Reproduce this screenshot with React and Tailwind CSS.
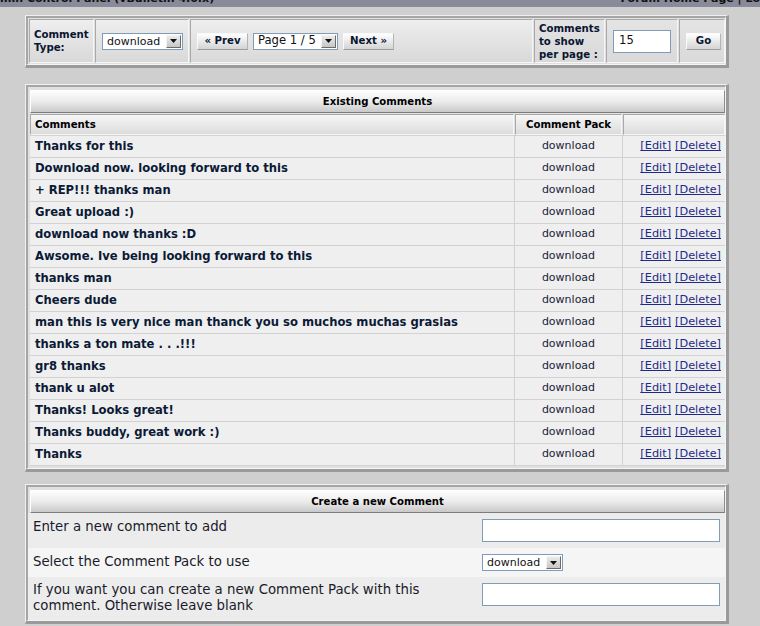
import React from 'react';

const comments = [
    'Thanks for this',
    'Download now. looking forward to this',
    '+ REP!!! thanks man',
    'Great upload :)',
    'download now thanks :D',
    'Awsome. Ive being looking forward to this',
    'thanks man',
    'Cheers dude',
    'man this is very nice man thanck you so muchos muchas grasias',
    'thanks a ton mate . . .!!!',
    'gr8 thanks',
    'thank u alot',
    'Thanks! Looks great!',
    'Thanks buddy, great work :)',
    'Thanks',
];

const cell = 'border border-t-[#a9a9a9] border-l-[#a9a9a9] border-r-[#f6f6f6] border-b-[#f6f6f6]';

// bevelled frame: light outer line, dark inner line on top/left; dark outer on bottom/right
function Panel({ className = '', inner = '', children }) {
    return (
        <div className={`ml-[25px] w-[704px] border-t border-l border-t-[#f0f0f0] border-l-[#f0f0f0] border-r-[3px] border-b-[3px] border-r-[#9a9a9a] border-b-[#9a9a9a] ${className}`}>
            <div className={`border-t-2 border-l-2 border-t-[#a6a6a6] border-l-[#a6a6a6] border-r border-b border-r-[#f4f4f4] border-b-[#f4f4f4] bg-[#e0e0e0] ${inner}`}>
                {children}
            </div>
        </div>
    );
}

function Select({ value, width, text = 'text-[11px]' }) {
    return (
        <div className={`flex h-[17px] items-center border border-[#7f9db9] bg-white ${width}`}>
            <span className={`flex-1 pl-[4px] leading-none text-[#111] ${text}`}>{value}</span>
            <span className="m-px flex h-[13px] w-[15px] items-center justify-center border border-t-[#f4f4f4] border-l-[#f4f4f4] border-r-[#6b6b6b] border-b-[#6b6b6b] bg-gradient-to-b from-[#ececec] to-[#c6c6c6]">
                <svg width="7" height="4" viewBox="0 0 7 4"><path d="M0 0h7L3.5 4z" fill="#111" /></svg>
            </span>
        </div>
    );
}

function Btn({ children, width }) {
    return (
        <div className={`flex h-[17px] items-center justify-center border border-t-[#fafafa] border-l-[#fafafa] border-r-[#b4b4b4] border-b-[#9c9c9c] bg-gradient-to-b from-[#ffffff] to-[#d4d4d4] text-[10.2px] font-bold text-[#0a1530] ${width}`}>
            {children}
        </div>
    );
}

function Header({ children }) {
    return (
        <div className="flex h-[23px] items-center justify-center border border-t-[#ffffff] border-l-[#ffffff] border-r-[#8c8c8c] border-b-[#7c7c7c] bg-gradient-to-b from-[#fdfdfd] via-[#ececec] to-[#c9c9c9] text-[10.1px] font-bold text-[#000]">
            {children}
        </div>
    );
}

export default function App() {
    return (
        <div className="min-h-[626px] bg-[#cfcfcf] font-['DejaVu_Sans',Verdana,sans-serif]">
            {/* top strip, mostly cut off */}
            <div className="flex h-[7px] justify-between overflow-hidden bg-[#898a9a] text-[11px] font-bold text-[#111]">
                <span className="-mt-[8px] leading-[13px]">min Control Panel (vBulletin 4.0.x)</span>
                <span className="-mt-[8px] leading-[13px]">Forum Home Page | Lo</span>
            </div>

            {/* filter bar */}
            <Panel className="mt-[8px]" inner="py-px pl-px">
                <div className="flex h-[44px] gap-px">
                    <div className={`${cell} flex w-[65px] items-center bg-gradient-to-b from-[#eeeeee] to-[#d9d9d9] pl-[4px] text-[10.2px] font-bold leading-[13px] text-[#0a1530]`}>
                        Comment<br />Type:
                    </div>
                    <div className={`${cell} flex w-[94px] items-center bg-gradient-to-b from-[#eeeeee] to-[#d9d9d9] pl-[6px]`}>
                        <Select value="download" width="w-[81px]" />
                    </div>
                    <div className={`${cell} flex w-[343px] items-center gap-[5px] bg-gradient-to-b from-[#eeeeee] to-[#d9d9d9] pl-[6px]`}>
                        <Btn width="w-[51px]">« Prev</Btn>
                        <Select value="Page 1 / 5" width="w-[85px]" text="text-[11.6px]" />
                        <Btn width="w-[51px]">Next »</Btn>
                    </div>
                    <div className={`${cell} flex w-[71px] items-center bg-gradient-to-b from-[#e4e4e4] to-[#d9d9d9] pl-[4px] text-[10.2px] font-bold leading-[13px] text-[#0a1530]`}>
                        Comments<br />to show<br />per page :
                    </div>
                    <div className={`${cell} flex w-[72px] items-center bg-gradient-to-b from-[#e4e4e4] to-[#d9d9d9] pl-[6px]`}>
                        <div className="flex h-[23px] w-[58px] items-center border border-[#7f9db9] bg-white pl-[5px] text-[11.6px] text-[#111]">15</div>
                    </div>
                    <div className={`${cell} flex flex-1 items-center bg-gradient-to-b from-[#e4e4e4] to-[#d9d9d9] pl-[6px]`}>
                        <Btn width="w-[35px]">Go</Btn>
                    </div>
                </div>
            </Panel>

            {/* existing comments */}
            <Panel className="mt-[16px]" inner="pt-[3px] pl-[2px] pb-[2px]">
                <Header>Existing Comments</Header>
                <div className="mt-px flex h-[21px] gap-px text-[10.2px] font-bold text-[#000]">
                    <div className={`${cell} flex w-[484px] items-center bg-gradient-to-b from-[#f6f6f6] to-[#dcdcdc] pl-[4px]`}>Comments</div>
                    <div className={`${cell} flex w-[107px] items-center justify-center bg-gradient-to-b from-[#f6f6f6] to-[#dcdcdc]`}>Comment Pack</div>
                    <div className={`${cell} flex-1 bg-gradient-to-b from-[#f6f6f6] to-[#dcdcdc]`} />
                </div>
                <div className="flex flex-col gap-px bg-[#d2d2d2] py-px">
                    {comments.map((c, i) => (
                        <div key={i} className="flex h-[21px] gap-px text-[11px]">
                            <div className="flex w-[484px] items-center bg-[#efefef] pl-[5px] text-[11.6px] font-bold text-[#0b1a36]">{c}</div>
                            <div className="flex w-[107px] items-center justify-center bg-[#efefef] text-[#1a2238]">download</div>
                            <div className="flex flex-1 items-center justify-end gap-[4px] bg-[#efefef] pr-[4px] text-[11.3px] text-[#1d2a8a]">
                                <a href="#" className="underline">[Edit]</a>
                                <a href="#" className="underline">[Delete]</a>
                            </div>
                        </div>
                    ))}
                </div>
            </Panel>

            {/* create new */}
            <Panel className="mt-[12px]" inner="pt-[3px]">
                <div className="pl-[2px]">
                    <Header>Create a new Comment</Header>
                </div>
                <div className="flex h-[35px] justify-between bg-[#ececec] pl-[5px] pt-[6px] text-[13.3px] text-[#1a1a2a]">
                    <span className="leading-[16px]">Enter a new comment to add</span>
                    <div className="mr-[5px] h-[23px] w-[238px] border border-[#7f9db9] bg-white" />
                </div>
                <div className="flex h-[29px] items-start bg-[#f5f5f5] pl-[5px] pt-[6px] text-[13.3px] text-[#1a1a2a]">
                    <span className="w-[449px] leading-[16px]">Select the Comment Pack to use</span>
                    <div>
                        <Select value="download" width="w-[81px]" />
                    </div>
                </div>
                <div className="flex h-[43px] justify-between bg-[#ececec] pl-[5px] pt-[5px] text-[13.3px] text-[#1a1a2a]">
                    <span className="w-[430px] leading-[16px]">If you want you can create a new Comment Pack with this comment. Otherwise leave blank</span>
                    <div className="mr-[5px] mt-[1px] h-[23px] w-[238px] border border-[#7f9db9] bg-white" />
                </div>
            </Panel>
        </div>
    );
}
